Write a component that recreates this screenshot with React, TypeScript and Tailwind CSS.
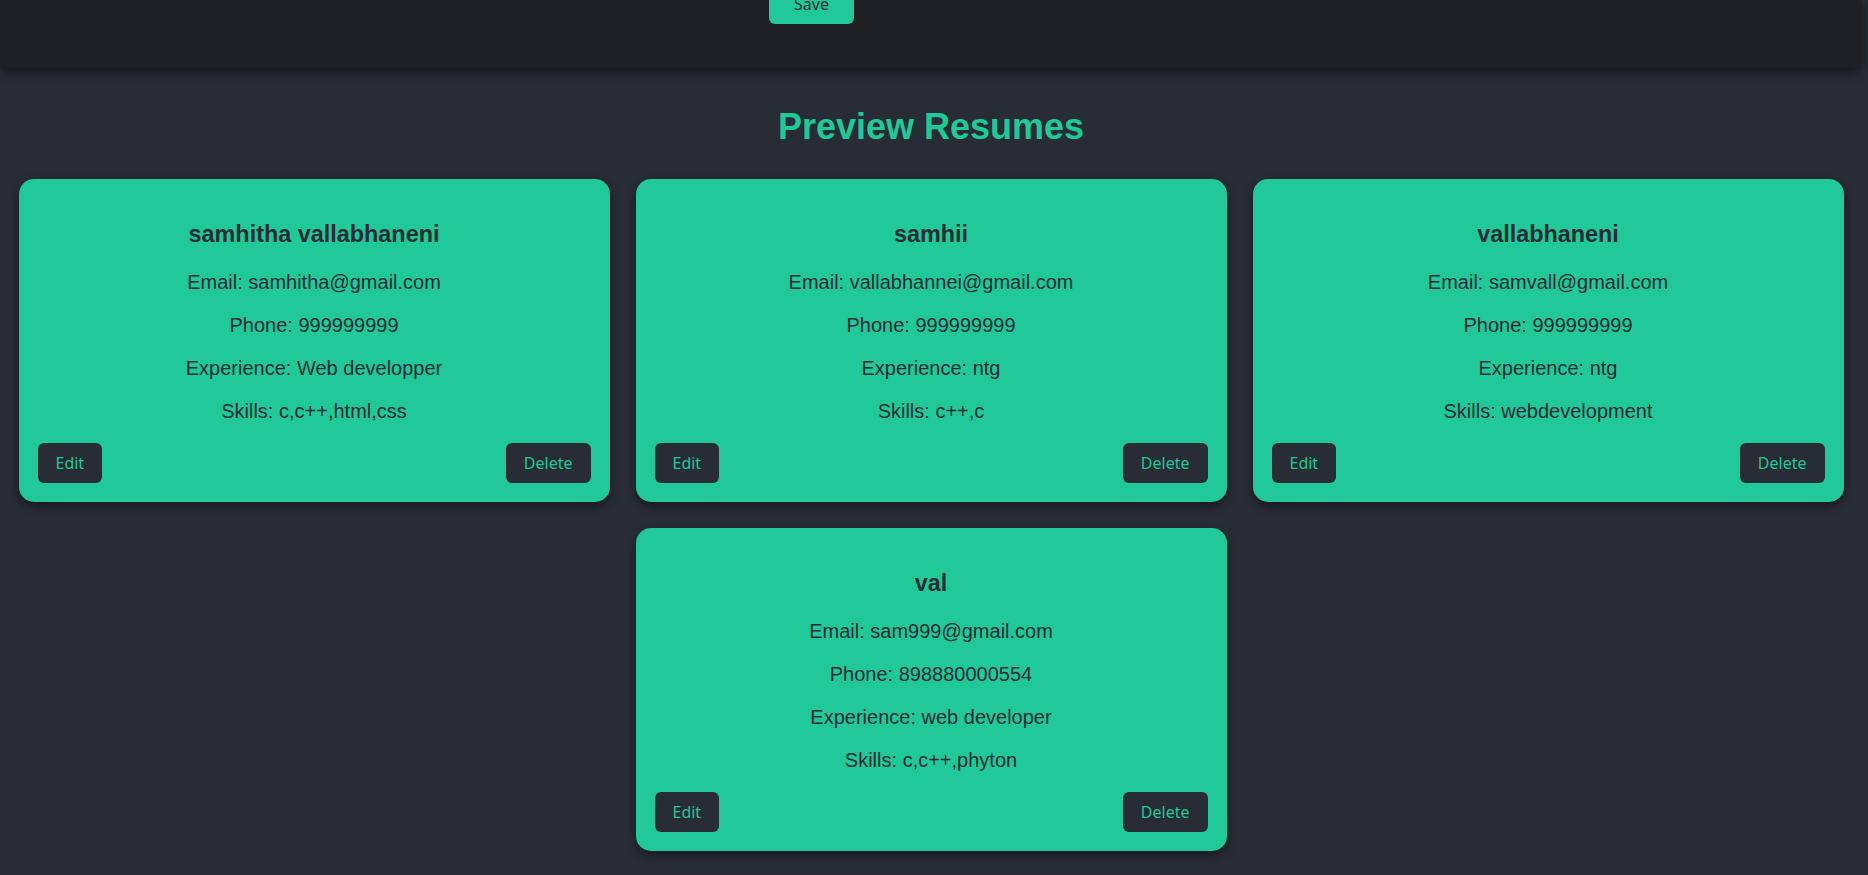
type Resume = {
  id: number;
  name: string;
  email: string;
  phone: string;
  experience: string;
  skills: string;
};

const resumes: Resume[] = [
  {
    id: 1,
    name: "samhitha vallabhaneni",
    email: "samhitha@gmail.com",
    phone: "999999999",
    experience: "Web developper",
    skills: "c,c++,html,css",
  },
  {
    id: 2,
    name: "samhii",
    email: "vallabhannei@gmail.com",
    phone: "999999999",
    experience: "ntg",
    skills: "c++,c",
  },
  {
    id: 3,
    name: "vallabhaneni",
    email: "samvall@gmail.com",
    phone: "999999999",
    experience: "ntg",
    skills: "webdevelopment",
  },
  {
    id: 4,
    name: "val",
    email: "sam999@gmail.com",
    phone: "898880000554",
    experience: "web developer",
    skills: "c,c++,phyton",
  },
];

const btn =
  "rounded-[6px] px-[18px] py-[9px] text-[16px] leading-[22px] font-['Noto_Sans',sans-serif]";

const ResumeCard = ({ r }: { r: Resume }) => (
  <article className="w-[591px] rounded-[15px] bg-[#20c997] p-[19px] text-center text-[#282c34] shadow-[0_4px_10px_rgba(0,0,0,0.45)]">
    <h3 className="mt-[23px] mb-[23px] text-[23.4px] font-bold leading-[27px]">
      {r.name}
    </h3>
    <p className="mb-[20px] text-[20px] leading-[23px]">Email: {r.email}</p>
    <p className="mb-[20px] text-[20px] leading-[23px]">Phone: {r.phone}</p>
    <p className="mb-[20px] text-[20px] leading-[23px]">
      Experience: {r.experience}
    </p>
    <p className="mb-[20px] text-[20px] leading-[23px]">Skills: {r.skills}</p>
    <div className="flex items-center justify-between">
      <button className={`${btn} bg-[#282c34] text-[#20c997]`}>Edit</button>
      <button className={`${btn} bg-[#282c34] text-[#20c997]`}>Delete</button>
    </div>
  </article>
);

const App = () => {
  return (
    <div className="min-h-screen bg-[#282c34] font-['Liberation_Sans',Arial,sans-serif]">
      <div className="w-[1862px] pb-[26px]">
        {/* bottom of the form, scrolled up */}
        <div className="flex h-[68px] items-start rounded-b-[8px] bg-[#1f2024] shadow-[0_4px_12px_rgba(0,0,0,0.5)]">
          <button
            className={`${btn} -mt-[16px] ml-[769px] w-[85px] bg-[#20c997] text-[#282c34]`}
          >
            Save
          </button>
        </div>

        <h2 className="mt-[38px] text-center text-[36px] font-bold leading-[42px] text-[#20c997]">
          Preview Resumes
        </h2>

        <div className="mt-[31px] flex flex-wrap justify-center gap-[26px]">
          {resumes.map((r) => (
            <ResumeCard key={r.id} r={r} />
          ))}
        </div>
      </div>
    </div>
  );
};

export default App;
